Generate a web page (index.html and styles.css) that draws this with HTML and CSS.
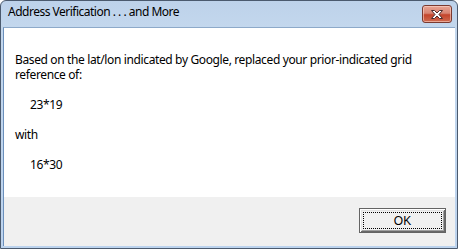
FILE: index.html
```html
<!DOCTYPE html>
<html>
<head>
<meta charset="utf-8">
<link rel="stylesheet" href="styles.css">
</head>
<body>
<div class="window">
  <div class="titlebar">
    <span class="title">Address Verification . . . and More</span>
    <div class="close">
      <svg width="16" height="11" viewBox="0 0 16 11">
        <path d="M2.5 1.5 L5.5 1.5 L8 4 L10.5 1.5 L13.5 1.5 L10 5.5 L13.5 9.5 L10.5 9.5 L8 7 L5.5 9.5 L2.5 9.5 L6 5.5 Z" fill="#ffffff" stroke="#4a2a2a" stroke-width="1" stroke-linejoin="round"/>
      </svg>
    </div>
  </div>
  <div class="client">
    <div class="content">
      <p class="line">Based on the lat/lon indicated by Google, replaced your prior-indicated grid</p>
      <p class="line">reference of:</p>
      <p class="line blank"></p>
      <p class="line indent">23*19</p>
      <p class="line blank"></p>
      <p class="line">with</p>
      <p class="line blank"></p>
      <p class="line indent">16*30</p>
    </div>
    <div class="footer">
      <button class="ok"><span class="focus">OK</span></button>
    </div>
  </div>
</div>
</body>
</html>
```

FILE: styles.css
```css
html, body {
  margin: 0;
  padding: 0;
  background: #ffffff;
}

.window {
  width: 458px;
  height: 249px;
  box-sizing: border-box;
  border: 1px solid #4b5a6e;
  border-radius: 6px 6px 0 0;
  background: linear-gradient(to bottom, #bdd2ea 0px, #c3d7ed 26px, #bcd3ee 100%);
  padding: 0 2px 2px 2px;
  display: flex;
  flex-direction: column;
}

.titlebar {
  height: 26px;
  display: flex;
  align-items: flex-start;
  justify-content: space-between;
  flex: none;
}

.title {
  font-family: "Noto Sans", sans-serif;
  font-size: 12px;
  letter-spacing: -0.5px;
  color: #000000;
  margin-left: 5px;
  margin-top: 3px;
  line-height: 16px;
}

.close {
  width: 28px;
  height: 16px;
  margin-top: 4px;
  margin-right: 3px;
  border: 1px solid #7a3a30;
  border-radius: 3px;
  background: linear-gradient(to bottom, #e8a493 0%, #d88472 45%, #c4442b 55%, #cf6a4f 100%);
  box-shadow: inset 0 0 0 1px rgba(255, 220, 210, 0.55);
  display: flex;
  align-items: center;
  justify-content: center;
}

.client {
  flex: 1;
  display: flex;
  flex-direction: column;
  background: #ffffff;
  border-top: 1px solid #8da9c9;
  border-left: 1px solid #6b8fbb;
}

.content {
  height: 169px;
  box-sizing: border-box;
  padding: 24px 0 0 11px;
  font-family: "Noto Sans", sans-serif;
  font-size: 12px;
  letter-spacing: -0.37px;
  color: #000000;
}

.line {
  margin: 0;
  height: 15px;
  line-height: 14px;
  padding-top: 1px;
  box-sizing: border-box;
  white-space: nowrap;
}

.indent {
  padding-left: 15px;
}

.footer {
  flex: 1;
  background: #f0f0f0;
  display: flex;
  justify-content: flex-end;
  align-items: flex-start;
  padding: 11px 9px 0 0;
}

.ok {
  width: 87px;
  height: 25px;
  box-sizing: border-box;
  margin: 0;
  padding: 2px;
  background: #f0f0f0;
  border: 1px solid #646464;
  box-shadow: inset 1px 1px 0 #ffffff, inset -1px -1px 0 #696969, inset 2px 2px 0 #e3e3e3, inset -2px -2px 0 #a0a0a0;
  display: flex;
}

.focus {
  flex: 1;
  margin: 1px;
  border: 1px dotted #000000;
  font-family: "Liberation Sans", sans-serif;
  font-size: 12px;
  color: #000000;
  display: flex;
  align-items: center;
  justify-content: center;
}
```
